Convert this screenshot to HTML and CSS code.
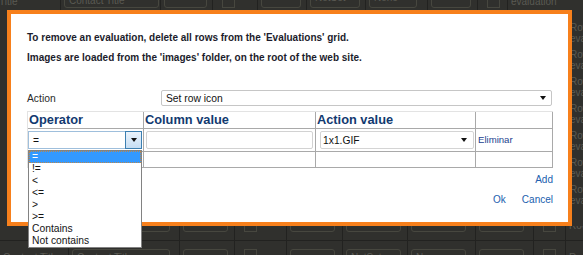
FILE: index.html
```html
<!DOCTYPE html>
<html>
<head>
<meta charset="utf-8">
<link rel="stylesheet" href="styles.css">
</head>
<body>
<div class="page">
  <div class="bg-row bg-top">
    <div class="cell w60"><span class="bg-text shift">Title</span></div>
    <div class="cell w100"><div class="box b95"><span>Contact Title</span></div></div>
    <div class="cell w52"><div class="box b43"></div></div>
    <div class="cell w45"><div class="chk"></div></div>
    <div class="cell w49"><div class="box b40"></div></div>
    <div class="cell w59"><div class="box b50 sel"><span>NotSet</span><i class="bgcaret"></i></div></div>
    <div class="cell w62"><div class="box b48 sel"><span>None</span><i class="bgcaret"></i></div></div>
    <div class="cell w50"><div class="box b40"></div></div>
    <div class="cell w30"><div class="chk"></div></div>
    <div class="cell grow"><span class="bg-text">evaluation</span></div>
  </div>
  <div class="bg-mid">
    <div class="side">
      <div class="side-item">Row<br>evaluation</div>
      <div class="side-item">Row<br>evaluation</div>
      <div class="side-item">Row<br>evaluation</div>
      <div class="side-item">Row<br>evaluation</div>
      <div class="side-item">Row<br>evaluation</div>
      <div class="side-item">Row<br>evaluation</div>
      <div class="side-item">Row<br>evaluation</div>
    </div>
  </div>
  <div class="bg-bottom">
    <div class="bg-row bg-b1">
      <div class="cell w69"></div>
      <div class="cell w111"><div class="box b98"></div></div>
      <div class="cell w55"><div class="box b45"></div></div>
      <div class="cell w52"><div class="chk"></div></div>
      <div class="cell w56"><div class="box b45"></div></div>
      <div class="cell w65"><div class="box b55 sel"><span>NotSet</span><i class="bgcaret"></i></div></div>
      <div class="cell w68"><div class="box b55 sel"><span>None</span><i class="bgcaret"></i></div></div>
      <div class="cell w58"><div class="box b45"></div></div>
      <div class="cell w32"><div class="chk"></div></div>
      <div class="cell grow"><span class="bg-text">Row</span></div>
    </div>
    <div class="bg-row bg-b2">
      <div class="cell w69"><span class="bg-text">Contact Title</span></div>
      <div class="cell w111"><div class="box b98"><span>Contact Title</span></div></div>
      <div class="cell w55"><div class="box b45"></div></div>
      <div class="cell w52"><div class="chk"></div></div>
      <div class="cell w56"><div class="box b45"></div></div>
      <div class="cell w65"><div class="box b55 sel"><span>NotSet</span></div></div>
      <div class="cell w68"><div class="box b55 sel"><span>None</span></div></div>
      <div class="cell w58"><div class="box b45"></div></div>
      <div class="cell w32"><div class="chk"></div></div>
      <div class="cell grow"><span class="bg-text">Row</span></div>
    </div>
  </div>
</div>

<div class="modal">
  <div class="modal-body">
    <p class="note">To remove an evaluation, delete all rows from the 'Evaluations' grid.</p>
    <p class="note second">Images are loaded from the 'images' folder, on the root of the web site.</p>
    <div class="action-row">
      <span class="label">Action</span>
      <div class="select wide"><span>Set row icon</span><i class="caret"></i></div>
    </div>
    <div class="grid">
      <div class="th">Operator</div>
      <div class="th">Column value</div>
      <div class="th">Action value</div>
      <div class="th"></div>

      <div class="td"><div class="combo"><span>=</span><div class="combo-btn"><i class="caret"></i></div></div></div>
      <div class="td"><div class="input"></div></div>
      <div class="td"><div class="select act"><span>1x1.GIF</span><i class="caret"></i></div></div>
      <div class="td"><a class="del">Eliminar</a></div>

      <div class="td short"></div>
      <div class="td short"></div>
      <div class="td short"></div>
      <div class="td short"></div>
    </div>
    <div class="add-row"><a class="link">Add</a></div>
    <div class="btn-row"><a class="link">Ok</a><a class="link">Cancel</a></div>
  </div>
  <ul class="listbox">
    <li class="hl">=</li>
    <li>!=</li>
    <li>&lt;</li>
    <li>&lt;=</li>
    <li>&gt;</li>
    <li>&gt;=</li>
    <li>Contains</li>
    <li>Not contains</li>
  </ul>
</div>
</body>
</html>
```
FILE: styles.css
```css
* { box-sizing: border-box; }
html, body { margin: 0; padding: 0; }
body {
  width: 583px;
  height: 255px;
  overflow: hidden;
  position: relative;
  background: #30302d;
  font-family: "Liberation Sans", Arial, sans-serif;
}

/* ---------- background page (dimmed) ---------- */
.page { display: flex; flex-direction: column; height: 255px; }
.bg-row {
  display: flex;
  flex: none;
  overflow: hidden;
  color: #5a5a53;
  font-size: 10px;
}
.bg-top { height: 10px; align-items: flex-end; }
.cell {
  flex: none;
  height: 27px;
  border-right: 1px solid #222220;
  display: flex;
  align-items: flex-end;
  padding-bottom: 2px;
  padding-left: 3px;
  overflow: hidden;
}
.cell.grow { flex: 1; border-right: none; }
.w30 { width: 30px; } .w32 { width: 32px; } .w45 { width: 45px; } .w49 { width: 49px; }
.w50 { width: 50px; } .w52 { width: 52px; } .w55 { width: 55px; } .w56 { width: 56px; }
.w58 { width: 58px; } .w59 { width: 59px; } .w60 { width: 61px; } .w62 { width: 62px; }
.w65 { width: 65px; } .w68 { width: 68px; } .w69 { width: 69px; } .w100 { width: 100px; }
.w111 { width: 111px; }
.box {
  height: 20px;
  border: 1px solid #47473f;
  border-radius: 3px;
  display: flex;
  align-items: flex-end;
  padding: 0 4px 1px;
  white-space: nowrap;
  overflow: hidden;
}
.box.sel { justify-content: space-between; align-items: center; }
.b40 { width: 40px; } .b43 { width: 43px; } .b45 { width: 45px; } .b48 { width: 48px; }
.b50 { width: 50px; } .b55 { width: 55px; } .b95 { width: 95px; } .b98 { width: 98px; }
.chk { width: 13px; height: 13px; border: 1px solid #47473f; margin-left: 6px; }
.bgcaret {
  width: 0; height: 0;
  border-left: 3px solid transparent;
  border-right: 3px solid transparent;
  border-top: 3px solid #5a5a53;
}
.bg-text { white-space: nowrap; padding-bottom: 1px; }
.bg-text.shift { margin-left: -4px; }

.bg-mid { height: 216px; flex: none; display: flex; justify-content: flex-end; }
.side {
  width: 17px;
  border-left: 1px solid #222220;
  padding: 12px 0 0 3px;
  overflow: hidden;
  color: #5a5a53;
  font-size: 10px;
}
.side-item { height: 27px; line-height: 11px; white-space: nowrap; }

.bg-bottom { height: 29px; flex: none; display: flex; flex-direction: column; overflow: hidden; }
.bg-b1 { height: 14px; align-items: flex-end; }
.bg-b1 .cell { padding-bottom: 8px; }
.bg-b2 { height: 15px; align-items: flex-start; }
.bg-b2 .cell { align-items: flex-start; padding-top: 8px; padding-bottom: 0; border-top: 1px solid #222220; }
.bg-b2 .box { align-items: flex-start; padding-top: 2px; }
.bg-b2 .bg-text { padding-top: 3px; }

/* ---------- modal ---------- */
.modal {
  position: absolute;
  left: 7px;
  top: 10px;
  width: 565px;
  height: 216px;
  background: #fff;
  border: 4px solid #f7801c;
}
.modal-body { padding: 17px 16px 0 16px; }
.note {
  margin: 0;
  font-size: 10px;
  font-weight: bold;
  line-height: 14px;
  color: #1c1c2c;
  white-space: nowrap;
}
.note.second { margin-top: 6px; }

.action-row { display: flex; align-items: center; margin-top: 25px; height: 16px; }
.label { width: 134px; flex: none; font-size: 10.3px; color: #2a2a2a; }
.select {
  display: flex;
  align-items: center;
  justify-content: space-between;
  background: #fff;
  font-size: 10.3px;
  color: #111;
}
.select.wide {
  width: 392px;
  height: 16px;
  border: 1px solid #c6c6c6;
  border-radius: 2px;
  padding: 0 5px 0 4px;
}
.caret {
  display: block;
  width: 0; height: 0;
  border-left: 3px solid transparent;
  border-right: 3px solid transparent;
  border-top: 4px solid #111;
}

.grid {
  margin-top: 5px;
  display: grid;
  grid-template-columns: 116px 172px 160px 77px;
  border-top: 1px solid #e3e3e3;
  border-left: 1px solid #e3e3e3;
  width: 526px;
}
.th, .td { border-right: 1px solid #a9a9a9; border-bottom: 1px solid #a9a9a9; }
.th {
  height: 17px;
  line-height: 16px;
  padding-left: 1px;
  font-size: 12.8px;
  font-weight: bold;
  color: #123a70;
  white-space: nowrap;
}
.td { height: 23px; display: flex; align-items: flex-start; padding-top: 2px; }
.td.short { height: 16px; padding: 0; }

.combo {
  width: 114px;
  height: 18px;
  border: 1px solid #9fbfdc;
  background: #fff;
  display: flex;
  align-items: center;
  justify-content: space-between;
  font-size: 10.3px;
  color: #111;
  padding-left: 4px;
}
.combo-btn {
  width: 17px;
  height: 18px;
  margin: -1px -1px -1px 0;
  border: 1px solid #3c7fb1;
  background: linear-gradient(#eaf3fc, #c6def4);
  display: flex;
  align-items: center;
  justify-content: center;
}
.input {
  margin-left: 2px;
  width: 167px;
  height: 18px;
  border: 1px solid #d2d2d2;
  border-radius: 2px;
}
.select.act {
  margin-left: 4px;
  width: 154px;
  height: 18px;
  border: 1px solid #d4d4d4;
  border-radius: 2px;
  padding: 0 6px 0 2px;
}
.del {
  font-size: 9.6px;
  color: #1b3f8f;
  line-height: 18px;
  padding-left: 2px;
}

.add-row { margin-top: 5px; height: 14px; display: flex; justify-content: flex-end; margin-right: -1px; }
.btn-row { margin-top: 6px; height: 14px; display: flex; justify-content: flex-end; gap: 16px; margin-right: -1px; }
.link { font-size: 10px; line-height: 14px; color: #2160ae; }

.listbox {
  position: absolute;
  left: 17px;
  top: 136px;
  width: 114px;
  margin: 0;
  padding: 0;
  list-style: none;
  background: #fff;
  border: 1px solid #828282;
  font-size: 10.3px;
  color: #151515;
}
.listbox li {
  height: 12px;
  line-height: 12px;
  padding-left: 3px;
  white-space: nowrap;
}
.listbox li.hl {
  background: #3399ff;
  color: #fff;
  outline: 1px dotted #b9874d;
  outline-offset: -1px;
}
```
